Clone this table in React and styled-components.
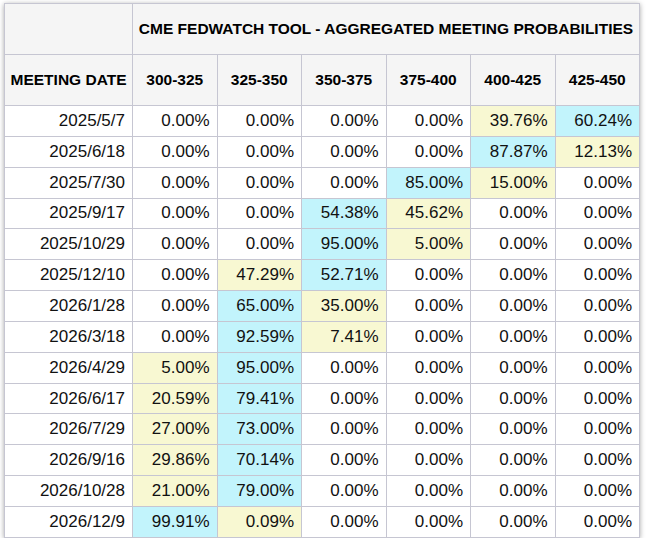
import React from "react";
import styled, { createGlobalStyle } from "styled-components";

const Global = createGlobalStyle`
  html, body {
    margin: 0;
    padding: 0;
    background: #ffffff;
  }
  body {
    font-family: "Liberation Sans", Arial, sans-serif;
  }
`;

const Page = styled.div`
  padding: 3px 0 0 4px;
`;

const Table = styled.table`
  width: 636px;
  table-layout: fixed;
  border-collapse: collapse;
  box-shadow: 0 1px 5px rgba(0, 0, 0, 0.35);
  color: #111;
`;

const Head = styled.th`
  background: #f5f5f5;
  border: 1px solid #c6c6d2;
  font-size: 15.5px;
  font-weight: bold;
  text-align: center;
  padding: 0;
  height: 50px;
  white-space: nowrap;
  color: #000;
`;

const Row = styled.tr`
  height: 30.85px;
`;

const Cell = styled.td`
  border: 1px solid #c6c6d2;
  font-size: 17px;
  text-align: right;
  padding: 0 7px 0 0;
  white-space: nowrap;
  background: ${(p) =>
    p.$tone === "hi" ? "#c2f4fc" : p.$tone === "mid" ? "#f8f8d2" : "#ffffff"};
`;

const ranges = ["300-325", "325-350", "350-375", "375-400", "400-425", "425-450"];

const rows = [
  ["2025/5/7", [0, 0, 0, 0, 39.76, 60.24]],
  ["2025/6/18", [0, 0, 0, 0, 87.87, 12.13]],
  ["2025/7/30", [0, 0, 0, 85, 15, 0]],
  ["2025/9/17", [0, 0, 54.38, 45.62, 0, 0]],
  ["2025/10/29", [0, 0, 95, 5, 0, 0]],
  ["2025/12/10", [0, 47.29, 52.71, 0, 0, 0]],
  ["2026/1/28", [0, 65, 35, 0, 0, 0]],
  ["2026/3/18", [0, 92.59, 7.41, 0, 0, 0]],
  ["2026/4/29", [5, 95, 0, 0, 0, 0]],
  ["2026/6/17", [20.59, 79.41, 0, 0, 0, 0]],
  ["2026/7/29", [27, 73, 0, 0, 0, 0]],
  ["2026/9/16", [29.86, 70.14, 0, 0, 0, 0]],
  ["2026/10/28", [21, 79, 0, 0, 0, 0]],
  ["2026/12/9", [99.91, 0.09, 0, 0, 0, 0]],
];

function tones(values) {
  const nonzero = values.filter((v) => v > 0);
  const max = Math.max(...values);
  return values.map((v) => {
    if (v <= 0) return "none";
    if (v === max) return "hi";
    return nonzero.length > 1 ? "mid" : "hi";
  });
}

export default function App() {
  return (
    <Page>
      <Global />
      <Table>
        <colgroup>
          <col style={{ width: 128 }} />
          {ranges.map((r) => (
            <col key={r} />
          ))}
        </colgroup>
        <thead>
          <tr>
            <Head />
            <Head colSpan={6}>
              CME FEDWATCH TOOL - AGGREGATED MEETING PROBABILITIES
            </Head>
          </tr>
          <tr>
            <Head>MEETING DATE</Head>
            {ranges.map((r) => (
              <Head key={r}>{r}</Head>
            ))}
          </tr>
        </thead>
        <tbody>
          {rows.map(([date, values]) => {
            const t = tones(values);
            return (
              <Row key={date}>
                <Cell>{date}</Cell>
                {values.map((v, i) => (
                  <Cell key={i} $tone={t[i]}>
                    {v.toFixed(2)}%
                  </Cell>
                ))}
              </Row>
            );
          })}
        </tbody>
      </Table>
    </Page>
  );
}
